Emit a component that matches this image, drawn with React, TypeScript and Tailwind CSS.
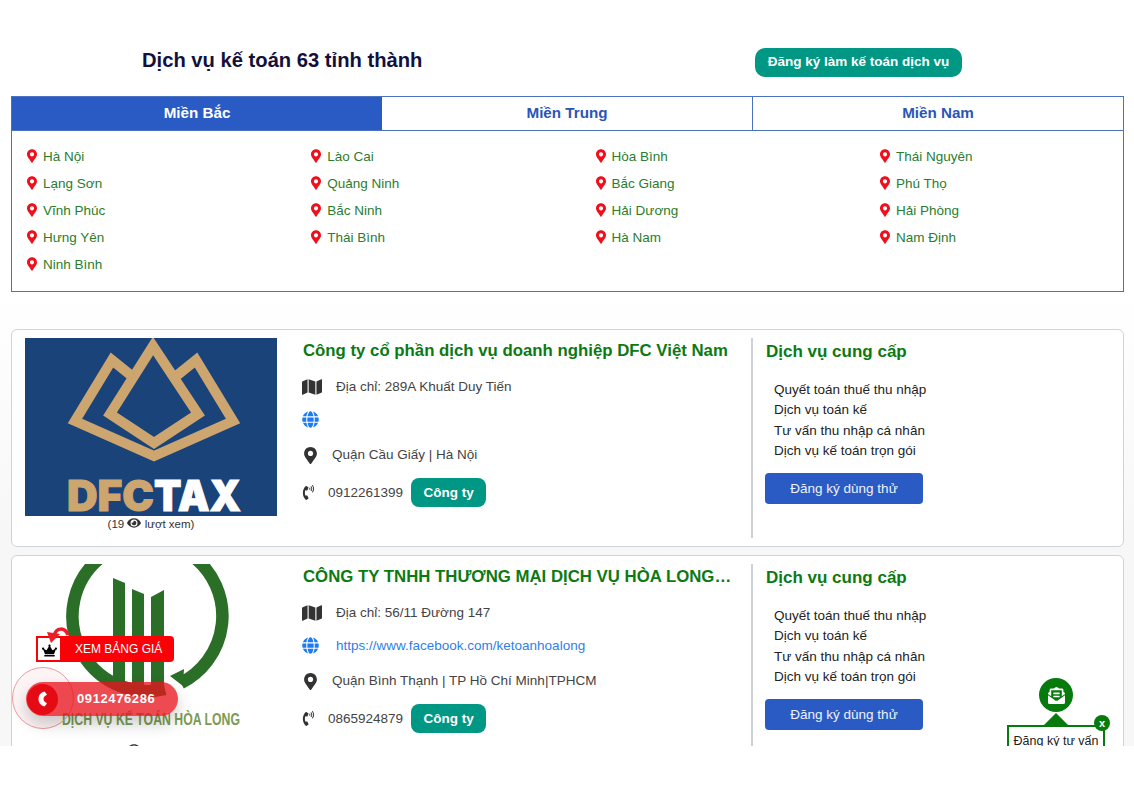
import { FaMap, FaGlobe, FaMapMarkerAlt, FaPhoneVolume, FaEye, FaCrown, FaEnvelopeOpenText } from "react-icons/fa";

const provinces = [
  "Hà Nội", "Lào Cai", "Hòa Bình", "Thái Nguyên",
  "Lạng Sơn", "Quảng Ninh", "Bắc Giang", "Phú Thọ",
  "Vĩnh Phúc", "Bắc Ninh", "Hải Dương", "Hải Phòng",
  "Hưng Yên", "Thái Bình", "Hà Nam", "Nam Định",
  "Ninh Bình",
];

const services = ["Quyết toán thuế thu nhập", "Dịch vụ toán kế", "Tư vấn thu nhập cá nhân", "Dịch vụ kế toán trọn gói"];

function DfcLogo() {
  return (
    <svg width="252" height="178" viewBox="0 0 252 178" className="block">
      <rect width="252" height="178" fill="#1a4379" />
      <g fill="none" stroke="#cda56f" strokeWidth="10" strokeMiterlimit="8">
        <path d="M128 8 L85 76 L129 105 L173 76 Z" />
        <path d="M108 39 L87 22 L50 83 L129 118 L208 83 L171 22 L150 39" />
      </g>
      <text x="42" y="173" fontFamily="Inter, 'Liberation Sans', sans-serif" fontWeight="900" fontSize="42" textLength="87" lengthAdjust="spacingAndGlyphs" stroke="#cda56f" strokeWidth="1" fill="#cda56f">DFC</text>
      <text x="129" y="173" fontFamily="Inter, 'Liberation Sans', sans-serif" fontWeight="900" fontSize="42" textLength="87" lengthAdjust="spacingAndGlyphs" stroke="#ffffff" strokeWidth="1" fill="#ffffff">TAX</text>
    </svg>
  );
}

function HoaLongLogo() {
  return (
    <svg width="252" height="178" viewBox="0 0 252 178" className="block">
      <rect width="252" height="178" fill="#ffffff" />
      <g fill="none" stroke="#2b6e27" strokeWidth="12.5">
        <path d="M75 -6 A75 75 0 0 0 140 125" />
        <path d="M170 -6 A75 75 0 0 1 156 119" />
      </g>
      <path d="M145 112 L159 105 L158 122 Z" fill="#2b6e27" />
      <g fill="#2b6e27">
        <path d="M88 14 L100 19 L100 128 L88 124 Z" />
        <path d="M107 25 L119 30 L119 130 L107 129 Z" />
        <path d="M126 33 L139 26 L139 129 L126 130 Z" />
      </g>
      <text x="37" y="161" fontFamily="'Liberation Sans', sans-serif" fontWeight="700" fontSize="17" textLength="178" lengthAdjust="spacingAndGlyphs" fill="#7c9b52">DỊCH VỤ KẾ TOÁN HÒA LONG</text>
    </svg>
  );
}

function Card({ logo, views, name, address, website, area, phone }: { logo: React.ReactNode; views: string; name: string; address: string; website?: string; area: string; phone: string }) {
  return (
    <div className="flex h-[218px] shrink-0 rounded-[6px] border border-[#ccd6d8] bg-white pl-[13px] pt-[8px]">
      <div className="w-[252px] shrink-0">
        {logo}
        <div className="text-center text-[11.5px] leading-[16px] text-[#333]">
          ({views} <FaEye className="inline text-[14px] align-[-2px]" /> lượt xem)
        </div>
      </div>
      <div className="ml-[25px] h-[200px] w-[451px] shrink-0 border-r-2 border-[#cfd3d6] pr-[17px]">
        <h3 className="truncate pl-[1px] text-[16.8px] font-bold leading-[26px] text-[#0c7a12]">{name}</h3>
        <div className="mt-[13px] flex h-[20px] items-center text-[13.5px] text-[#444]">
          <FaMap className="w-[20px] text-[18px] text-[#333]" />
          <span className="ml-[14px]">{address}</span>
        </div>
        <div className="mt-[12px] flex h-[20px] items-center text-[13.5px] text-[#2f7fe8]">
          <FaGlobe className="text-[17px] text-[#1c7bf0]" />
          <span className="ml-[17px] pt-[2px]">{website}</span>
        </div>
        <div className="mt-[16px] flex h-[20px] items-center text-[13.5px] text-[#444]">
          <FaMapMarkerAlt className="text-[17px] text-[#333]" />
          <span className="ml-[13px]">{area}</span>
        </div>
        <div className="mt-[13px] flex h-[29px] items-center text-[13.5px] text-[#444]">
          <FaPhoneVolume className="w-[13px] text-[15px] text-[#333]" />
          <span className="ml-[13px] pt-[1px]">{phone}</span>
          <span className="ml-[8px] flex h-[29px] w-[75px] items-center justify-center rounded-[8px] bg-[#009784] pt-[1px] font-bold text-white">Công ty</span>
        </div>
      </div>
      <div className="ml-[12px] flex-1">
        <h3 className="mt-[1px] pl-[1px] text-[17px] font-bold leading-[26px] text-[#0c7a12]">Dịch vụ cung cấp</h3>
        <ul className="ml-[9px] mt-[15px] text-[13.5px] leading-[20.3px] text-[#222]">
          {services.map((s) => (
            <li key={s}>{s}</li>
          ))}
        </ul>
        <div className="mt-[12px] flex h-[31px] w-[158px] items-center justify-center rounded-[4px] bg-[#2a5bc4] text-[13.5px] text-[#eef2fb]">Đăng ký dùng thử</div>
      </div>
    </div>
  );
}

export default function App() {
  return (
    <div className="h-[800px] bg-white font-['Liberation_Sans',Arial,sans-serif]">
      <div className="relative h-[746px] overflow-hidden bg-white">
        <div className="px-[11px] pt-[48px]">
          <div className="flex h-[29px] items-center">
            <h1 className="ml-[131px] w-[613px] pb-[5px] text-[20.2px] font-bold text-[#12113d]">Dịch vụ kế toán 63 tỉnh thành</h1>
            <div className="flex h-[29px] w-[207px] items-center justify-center rounded-[10px] bg-[#009784] text-[13.5px] font-bold text-white">Đăng ký làm kế toán dịch vụ</div>
          </div>

          <div className="mt-[19px] h-[196px] w-[1113px] border border-[#4a72c0]">
            <div className="flex h-[34px] border-b border-[#4a72c0] text-[15.2px] font-bold">
              <div className="flex w-[370px] items-center justify-center bg-[#2a5bc4] text-white">Miền Bắc</div>
              <div className="flex w-[371px] items-center justify-center border-r border-[#4a72c0] text-[#2a55b8]">Miền Trung</div>
              <div className="flex flex-1 items-center justify-center text-[#2a55b8]">Miền Nam</div>
            </div>
            <div className="grid grid-cols-[284.3px_284.3px_284.3px_1fr] pl-[15px] pt-[12px]">
              {provinces.map((p) => (
                <div key={p} className="flex h-[27px] items-center text-[13.5px] text-[#2a7d2e]">
                  <FaMapMarkerAlt className="-mt-[1px] w-[10px] text-[14px] text-[#f0101c]" />
                  <span className="ml-[6px] pt-[1px]">{p}</span>
                </div>
              ))}
            </div>
          </div>
        </div>

        <div className="flex flex-col gap-[8px] bg-linear-to-b from-white to-[#f7f7f7] to-[250px] pl-[11px] pr-[10px] pt-[37px]">
          <Card logo={<DfcLogo />} views="19" name="Công ty cổ phần dịch vụ doanh nghiệp DFC Việt Nam" address="Địa chỉ: 289A Khuất Duy Tiến" area="Quận Cầu Giấy | Hà Nội" phone="0912261399" />
          <Card logo={<HoaLongLogo />} views="21" name="CÔNG TY TNHH THƯƠNG MẠI DỊCH VỤ HÒA LONG TPHCM" address="Địa chỉ: 56/11 Đường 147" website="https://www.facebook.com/ketoanhoalong" area="Quận Bình Thạnh | TP Hồ Chí Minh|TPHCM" phone="0865924879" />
        </div>

        {/* XEM BẢNG GIÁ */}
        <div className="absolute left-[36px] top-[636px] flex h-[26px] w-[138px] items-center rounded-r-[4px] bg-[#fa0007] text-[12px] text-white">
          <span className="flex h-[26px] w-[26px] items-center justify-center border-2 border-[#fa0007] bg-white">
            <FaCrown className="mt-[3px] text-[15px] text-black" />
          </span>
          <span className="ml-[13px]">XEM BẢNG GIÁ</span>
          <svg width="24" height="18" viewBox="0 0 24 18" className="absolute left-[10px] top-[-10px]">
            <path d="M22 9 C19 1 10 1 8 10" fill="none" stroke="#ee1c25" strokeWidth="3.5" />
            <path d="M1 6 L14 8 L5 17 Z" fill="#ee1c25" />
          </svg>
        </div>

        {/* Hotline */}
        <div className="absolute left-[12px] top-[667px] h-[62px] w-[62px] rounded-full border border-[#ee9aa0] bg-[#ee9aa01a]" />
        <div className="absolute left-[26px] top-[682px] flex h-[34px] w-[152px] items-center rounded-full bg-[#e8141cc4] pl-[1px] shadow-[0_8px_16px_rgba(0,0,0,0.2)]">
          <span className="flex h-[31px] w-[31px] items-center justify-center rounded-full bg-[#e50b14]">
            <svg width="10" height="16" viewBox="0 0 10 16">
              <path d="M6.5 0.5 C2.5 1.5 0.5 4.5 0.5 8 C0.5 11.5 2.5 14.5 6.5 15.5 L9 12.5 L6.5 10.5 C5.2 9.5 5.2 6.5 6.5 5.5 L9 3.5 Z" fill="#ffffff" />
            </svg>
          </span>
          <span className="ml-[19px] text-[13px] font-bold tracking-[0.6px] text-white">0912476286</span>
        </div>

        {/* Đăng ký tư vấn */}
        <div className="absolute left-[1039px] top-[678px] flex h-[34px] w-[34px] items-center justify-center rounded-full bg-[#067a0c]">
          <FaEnvelopeOpenText className="text-[17px] text-white" />
        </div>
        <svg width="26" height="13" viewBox="0 0 26 13" className="absolute left-[1043px] top-[713px]">
          <path d="M13 0 L26 13 L0 13 Z" fill="#067a0c" />
        </svg>
        <div className="absolute left-[1007px] top-[725px] h-[40px] w-[98px] border-2 border-[#067a0c] bg-white pt-[5px] text-center text-[12.5px] leading-[18px] text-[#222]">Đăng ký tư vấn</div>
        <div className="absolute left-[1094px] top-[715px] flex h-[16px] w-[16px] items-center justify-center rounded-full bg-[#067a0c] text-[11px] font-bold leading-none text-white">x</div>
      </div>
    </div>
  );
}
